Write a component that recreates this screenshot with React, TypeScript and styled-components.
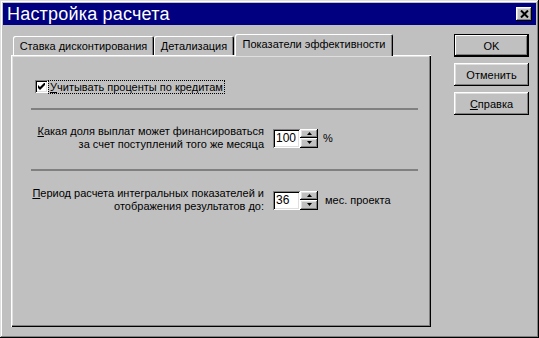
import styled, { createGlobalStyle } from "styled-components";

const GlobalStyle = createGlobalStyle`
  body {
    margin: 0;
    background: #c0c0c0;
    font-family: "Liberation Sans", Arial, sans-serif;
    font-size: 11px;
    color: #000;
  }
`;

const raised = `
  box-shadow: inset -1px -1px #000, inset 1px 1px #fff,
    inset -2px -2px #808080, inset 2px 2px #dfdfdf;
`;

const sunken = `
  box-shadow: inset 1px 1px #808080, inset -1px -1px #fff,
    inset 2px 2px #000, inset -2px -2px #dfdfdf;
`;

const Window = styled.div`
  width: 539px;
  height: 338px;
  box-sizing: border-box;
  padding: 3px;
  background: #c0c0c0;
  display: flex;
  flex-direction: column;
  box-shadow: inset -1px -1px #000, inset 1px 1px #dfdfdf,
    inset -2px -2px #808080, inset 2px 2px #fff;
`;

const TitleBar = styled.div`
  height: 22px;
  background: #000080;
  display: flex;
  align-items: center;
  justify-content: space-between;
  padding: 0 4px 0 4px;
`;

const Title = styled.span`
  color: #fff;
  font-size: 18px;
  letter-spacing: 0.2px;
`;

const CloseButton = styled.div`
  width: 16px;
  height: 14px;
  background: #c0c0c0;
  display: flex;
  align-items: center;
  justify-content: center;
  ${raised}
`;

const Body = styled.div`
  display: flex;
  padding: 9px 0 0 8px;
`;

const TabArea = styled.div`
  width: 420px;
  display: flex;
  flex-direction: column;
`;

const TabRow = styled.div`
  height: 21px;
  display: flex;
  align-items: flex-end;
  padding-left: 2px;
  position: relative;
  z-index: 1;
`;

const Tab = styled.div<{ $width: number; $active?: boolean }>`
  width: ${(p) => p.$width}px;
  height: ${(p) => (p.$active ? 22 : 19)}px;
  margin-bottom: ${(p) => (p.$active ? -1 : 0)}px;
  margin-left: ${(p) => (p.$active ? 1 : 0)}px;
  box-sizing: border-box;
  background: #c0c0c0;
  border-radius: 2px 2px 0 0;
  display: flex;
  align-items: center;
  justify-content: center;
  padding-bottom: ${(p) => (p.$active ? 2 : 0)}px;
  white-space: nowrap;
  box-shadow: inset 1px 1px #fff, inset -1px 0 #000, inset -2px 0 #808080;
`;

const Panel = styled.div`
  height: 272px;
  box-sizing: border-box;
  padding: 25px 13px 0 20px;
  display: flex;
  flex-direction: column;
  box-shadow: inset 1px 1px #fff, inset -1px -1px #000,
    inset -2px -2px #808080, inset 2px 2px #dfdfdf;
`;

const CheckRow = styled.div`
  display: flex;
  align-items: center;
  padding-left: 4px;
  height: 13px;
`;

const CheckBox = styled.div`
  width: 13px;
  height: 13px;
  box-sizing: border-box;
  background: #fff;
  display: flex;
  align-items: center;
  justify-content: center;
  ${sunken}
`;

const FocusLabel = styled.span`
  margin-left: 1px;
  padding: 0 1px;
  line-height: 12px;
  outline: 1px dotted #000;
  outline-offset: 0;
`;

const Separator = styled.div<{ $top: number }>`
  margin-top: ${(p) => p.$top}px;
  height: 2px;
  background: #808080;
`;

const FieldRow = styled.div<{ $top: number }>`
  margin-top: ${(p) => p.$top}px;
  display: flex;
  align-items: center;
`;

const FieldLabel = styled.div`
  width: 233px;
  text-align: right;
  line-height: 13px;
  white-space: nowrap;
`;

const Field = styled.div`
  margin-left: 9px;
  width: 27px;
  height: 19px;
  box-sizing: border-box;
  background: #fff;
  padding: 2px 0 0 3px;
  font-size: 12px;
  line-height: 15px;
  ${sunken}
`;

const Spinner = styled.div`
  width: 18px;
  height: 19px;
  display: flex;
  flex-direction: column;
`;

const SpinButton = styled.div`
  flex: 1;
  background: #c0c0c0;
  display: flex;
  align-items: center;
  justify-content: center;
  ${raised}
`;

const Unit = styled.span<{ $gap: number }>`
  margin-left: ${(p) => p.$gap}px;
`;

const ButtonColumn = styled.div`
  margin-left: 23px;
  display: flex;
  flex-direction: column;
  gap: 6px;
`;

const Button = styled.div<{ $default?: boolean }>`
  width: 75px;
  height: 23px;
  box-sizing: border-box;
  background: #c0c0c0;
  display: flex;
  align-items: center;
  justify-content: center;
  box-shadow: ${(p) =>
    p.$default
      ? "inset 0 0 0 1px #000, inset -2px -2px #000, inset 2px 2px #fff, inset -3px -3px #808080"
      : "inset -1px -1px #000, inset 1px 1px #fff, inset -2px -2px #808080, inset 2px 2px #dfdfdf"};
`;

function Arrow({ up }: { up?: boolean }) {
  return (
    <svg width="5" height="3" viewBox="0 0 5 3">
      <path d={up ? "M2.5 0 L5 3 L0 3 Z" : "M0 0 L5 0 L2.5 3 Z"} fill="#000" />
    </svg>
  );
}

function Spin() {
  return (
    <Spinner>
      <SpinButton>
        <Arrow up />
      </SpinButton>
      <SpinButton>
        <Arrow />
      </SpinButton>
    </Spinner>
  );
}

export default function App() {
  return (
    <>
      <GlobalStyle />
      <Window>
        <TitleBar>
          <Title>Настройка расчета</Title>
          <CloseButton>
            <svg width="9" height="8" viewBox="0 0 9 8">
              <path d="M1 0.5 L8 7.5 M8 0.5 L1 7.5" stroke="#000" strokeWidth="2" />
            </svg>
          </CloseButton>
        </TitleBar>
        <Body>
          <TabArea>
            <TabRow>
              <Tab $width={141}>Ставка дисконтирования</Tab>
              <Tab $width={80}>Детализация</Tab>
              <Tab $width={158} $active>
                Показатели эффективности
              </Tab>
            </TabRow>
            <Panel>
              <CheckRow>
                <CheckBox>
                  <svg width="7" height="7" viewBox="0 0 7 7">
                    <path d="M0 2 L0 5 L2 7 L7 2 L7 -1 L2 4 Z" fill="#000" />
                  </svg>
                </CheckBox>
                <FocusLabel>
                  <u>У</u>читывать проценты по кредитам
                </FocusLabel>
              </CheckRow>
              <Separator $top={15} />
              <FieldRow $top={15}>
                <FieldLabel>
                  <u>К</u>акая доля выплат может финансироваться
                  <br />
                  за счет поступлений того же месяца
                </FieldLabel>
                <Field>100</Field>
                <Spin />
                <Unit $gap={5}>%</Unit>
              </FieldRow>
              <Separator $top={18} />
              <FieldRow $top={16}>
                <FieldLabel>
                  <u>П</u>ериод расчета интегральных показателей и
                  <br />
                  отображения результатов до:
                </FieldLabel>
                <Field>36</Field>
                <Spin />
                <Unit $gap={7}>мес. проекта</Unit>
              </FieldRow>
            </Panel>
          </TabArea>
          <ButtonColumn>
            <Button $default>OK</Button>
            <Button>Отменить</Button>
            <Button>
              <span>
                <u>С</u>правка
              </span>
            </Button>
          </ButtonColumn>
        </Body>
      </Window>
    </>
  );
}
